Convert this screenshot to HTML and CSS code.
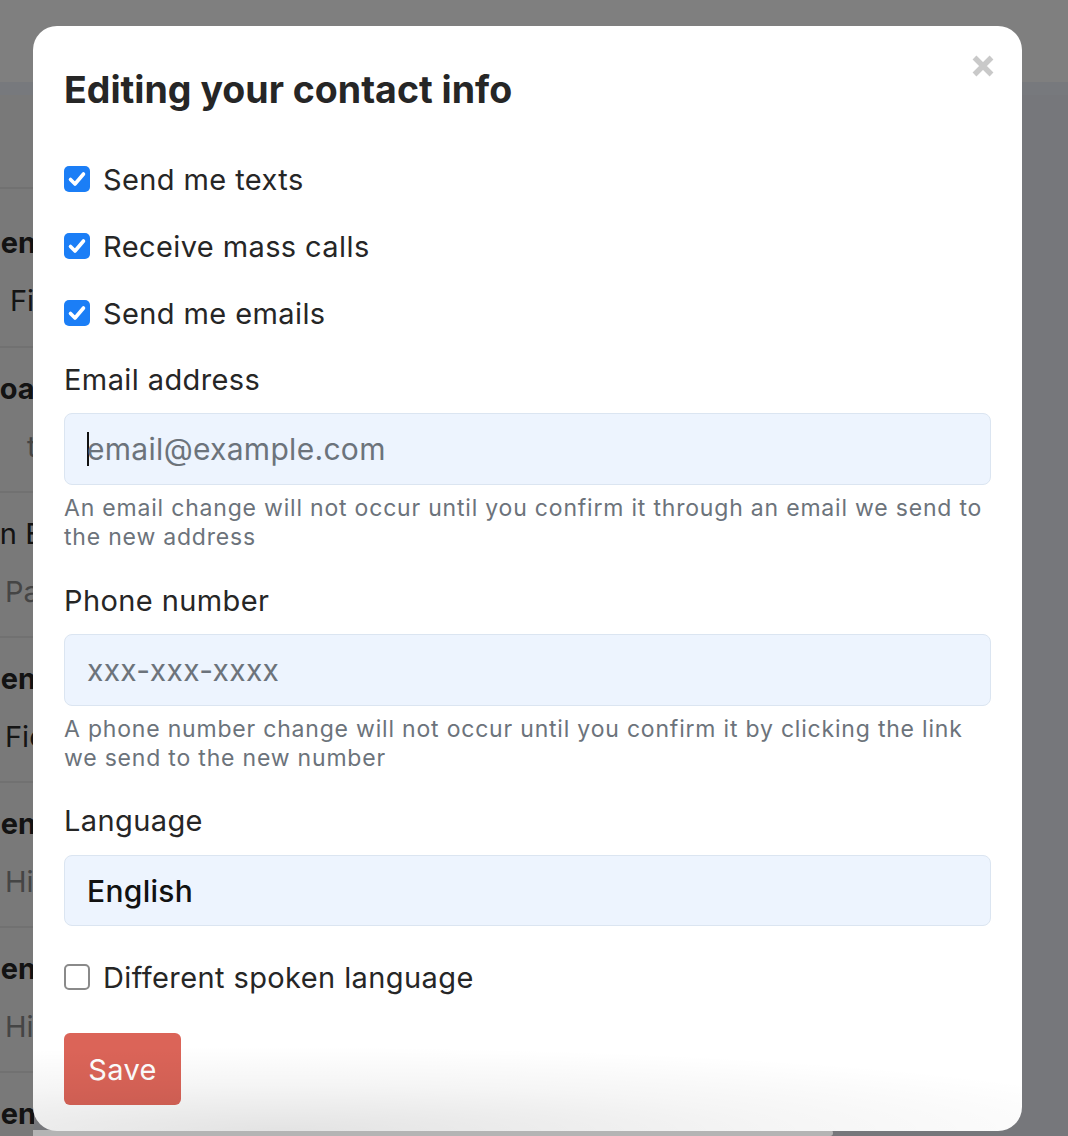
FILE: index.html
```html
<!DOCTYPE html>
<html lang="en">
<head>
<meta charset="utf-8">
<title>Editing your contact info</title>
<link rel="stylesheet" href="styles.css">
</head>
<body>
<div class="page">
  <header class="topbar"></header>
  <div class="subbar"></div>
  <div class="main">
    <div class="list">
      <div class="item first"><span class="l1 shift-a">Open Issue</span><span class="l2 shift-b">Field notes</span></div>
      <div class="item"><span class="l1 shift-g">Goal tracking</span><span class="l2 muted shift-t">test</span></div>
      <div class="item"><span class="l1 reg shift-o">Open Event</span><span class="l2 muted shift-p">Past due</span></div>
      <div class="item"><span class="l1 shift-a">Open Issue</span><span class="l2 shift-p">Field work</span></div>
      <div class="item"><span class="l1 shift-a">Open Issue</span><span class="l2 muted shift-p">Hidden</span></div>
      <div class="item"><span class="l1 shift-a">Open Issue</span><span class="l2 muted shift-p">Hidden</span></div>
      <div class="item"><span class="l1 shift-a">Open Issue</span></div>
    </div>
    <div class="content"></div>
  </div>
</div>

<div class="backdrop">
  <div class="modal">
    <button class="close" type="button" aria-label="Close">
      <svg width="24" height="24" viewBox="0 0 24 24"><path d="M3.5 3.5 L20.5 20.5 M20.5 3.5 L3.5 20.5" stroke="#c9c9c9" stroke-width="5.4" stroke-linecap="butt" fill="none"/></svg>
    </button>
    <h1 class="title">Editing your contact info</h1>

    <div class="checks">
      <label class="check"><span class="box on"><svg width="26" height="26" viewBox="0 0 26 26"><path d="M6.5 13.5 L11 18 L19.5 8" stroke="#fff" stroke-width="3.6" fill="none" stroke-linecap="round" stroke-linejoin="round"/></svg></span>Send me texts</label>
      <label class="check"><span class="box on"><svg width="26" height="26" viewBox="0 0 26 26"><path d="M6.5 13.5 L11 18 L19.5 8" stroke="#fff" stroke-width="3.6" fill="none" stroke-linecap="round" stroke-linejoin="round"/></svg></span>Receive mass calls</label>
      <label class="check"><span class="box on"><svg width="26" height="26" viewBox="0 0 26 26"><path d="M6.5 13.5 L11 18 L19.5 8" stroke="#fff" stroke-width="3.6" fill="none" stroke-linecap="round" stroke-linejoin="round"/></svg></span>Send me emails</label>
    </div>

    <div class="field">
      <div class="label">Email address</div>
      <div class="input"><span class="caret"></span><span class="ph">email@example.com</span></div>
      <div class="help">An email change will not occur until you confirm it through an email we send to the new address</div>
    </div>

    <div class="field">
      <div class="label">Phone number</div>
      <div class="input"><span class="ph">xxx-xxx-xxxx</span></div>
      <div class="help">A phone number change will not occur until you confirm it by clicking the link we send to the new number</div>
    </div>

    <div class="field lang">
      <div class="label">Language</div>
      <div class="input select"><span class="val">English</span></div>
    </div>

    <label class="check last"><span class="box"></span>Different spoken language</label>

    <button class="save" type="button">Save</button>
  </div>
  <div class="scrollbar"></div>
</div>
</body>
</html>
```

FILE: styles.css
```css
* { box-sizing: border-box; }
html, body { margin: 0; padding: 0; }
body {
  width: 1068px;
  height: 1136px;
  overflow: hidden;
  font-family: Inter, "Helvetica Neue", "Liberation Sans", sans-serif;
  background: #fff;
  position: relative;
}

/* background page */
.page { width: 1068px; height: 1136px; display: flex; flex-direction: column; overflow: hidden; }
.topbar { height: 82px; background: #ffffff; flex: none; }
.subbar { height: 13px; background: #eef3fb; flex: none; }
.main { flex: 1; display: flex; background: #eceff6; }
.list { width: 34px; flex: none; background: #f3f3f3; padding-top: 92px; overflow: hidden; }
.item {
  height: 145px;
  border-top: 2px solid #e2e2e2;
  display: flex; flex-direction: column;
  padding-top: 25px;
  gap: 26px;
  font-size: 29px;
  line-height: 32px;
  white-space: nowrap;
  color: #2a2a2a;
}
.item.first { height: 159px; padding-top: 38px; }
.l1 { font-weight: 700; color: #262626; }
.l1.reg { font-weight: 400; }
.l2 { color: #2a2a2a; }
.l2.muted { color: #8a8a8a; }
.shift-a { margin-left: -40px; }
.shift-g { margin-left: -22px; }
.shift-o { margin-left: -57px; }
.shift-b { margin-left: 10px; }
.shift-t { margin-left: 27px; }
.shift-p { margin-left: 5px; }
.content { flex: 1; }

/* overlay */
.backdrop {
  position: absolute; inset: 0;
  background: rgba(0, 0, 0, 0.5);
  padding-top: 26px;
  overflow: hidden;
}
.modal {
  position: relative;
  width: 989px;
  margin-left: 33px;
  background: #fff;
  border-radius: 24px;
  padding: 42px 31px 26px 31px;
  color: #262626;
  overflow: hidden;
}
.modal::after {
  content: "";
  position: absolute;
  left: 0; right: 0; bottom: 0;
  height: 85px;
  background: radial-gradient(ellipse 900px 85px at 25% 100%, rgba(0,0,0,0.11), rgba(0,0,0,0.04) 55%, rgba(0,0,0,0) 100%);
  pointer-events: none;
}
.scrollbar {
  width: 800px; height: 6px; margin-left: 33px; margin-top: -1px;
  background: #b4b4b4; border-radius: 0 4px 4px 0;
}

.close {
  position: absolute; top: 28px; right: 27px;
  width: 24px; height: 24px; padding: 0; border: 0; background: none;
}
.close svg { display: block; }

.title {
  margin: 0 0 47px 0;
  font-size: 37.5px;
  line-height: 44px;
  font-weight: 700;
  color: #262626;
}

.checks { display: flex; flex-direction: column; gap: 27px; }
.check {
  display: flex; align-items: center;
  height: 40px;
  font-size: 29px;
  letter-spacing: 0.4px;
  color: #262626;
}
.box {
  width: 26px; height: 26px;
  border-radius: 5px;
  border: 2px solid #8a8a8a;
  margin-right: 13px;
  flex: none;
  background: #fff;
}
.box.on { background: #1b7ef6; border: 0; }
.box svg { display: block; }

.field { margin-top: 27px; }
.label { font-size: 29px; line-height: 40px; letter-spacing: 0.4px; color: #262626; margin-bottom: 13px; }
.input {
  height: 72px;
  background: #edf4fe;
  border: 1px solid #dbe5f1;
  border-radius: 8px;
  display: flex; align-items: center;
  padding-left: 22px;
  font-size: 30px;
  letter-spacing: 0.3px;
  position: relative;
}
.ph { color: #6c737b; }
.caret { width: 2px; height: 34px; background: #111; margin-right: -2px; }
.select { height: 71px; }
.val { color: #111; font-weight: 500; }
.help {
  margin-top: 9px;
  font-size: 23px;
  line-height: 29px;
  color: #6c737b;
  letter-spacing: 0.8px;
}
.field + .field { margin-top: 29px; }
.field.lang { margin-top: 28px; }
.lang .label { margin-bottom: 14px; }

.check.last { margin-top: 31px; }

.save {
  display: block;
  margin-top: 36px;
  width: 117px; height: 72px;
  background: #db6458;
  color: #fff;
  border: 0;
  border-radius: 6px;
  font-family: inherit;
  font-size: 29px;
  letter-spacing: 0.3px;
}
```
